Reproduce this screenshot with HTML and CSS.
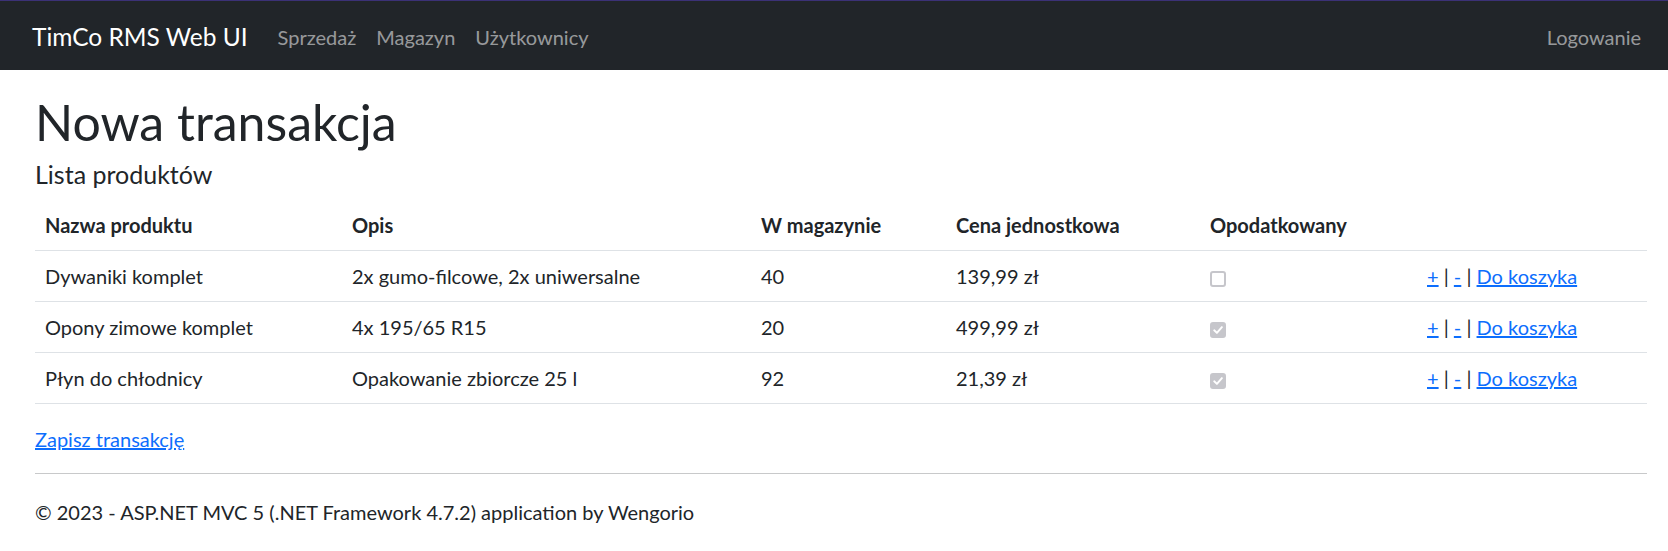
FILE: index.html
```html
<!DOCTYPE html>
<html lang="pl">
<head>
<meta charset="utf-8">
<title>Nowa transakcja - TimCo RMS Web UI</title>
<link rel="stylesheet" href="styles.css">
</head>
<body>
<nav class="navbar">
  <a class="brand" href="#">TimCo RMS Web UI</a>
  <ul class="nav-links">
    <li><a href="#">Sprzedaż</a></li>
    <li><a href="#">Magazyn</a></li>
    <li><a href="#">Użytkownicy</a></li>
  </ul>
  <ul class="nav-links nav-right">
    <li><a href="#">Logowanie</a></li>
  </ul>
</nav>
<main class="content">
  <h1 class="title">Nowa transakcja</h1>
  <h5 class="subtitle">Lista produktów</h5>
  <table class="products">
    <colgroup>
      <col class="c-name"><col class="c-desc"><col class="c-stock"><col class="c-price"><col class="c-tax"><col class="c-act">
    </colgroup>
    <thead>
      <tr><th>Nazwa produktu</th><th>Opis</th><th>W magazynie</th><th>Cena jednostkowa</th><th>Opodatkowany</th><th></th></tr>
    </thead>
    <tbody>
      <tr>
        <td>Dywaniki komplet</td><td>2x gumo-filcowe, 2x uniwersalne</td><td>40</td><td>139,99 zł</td>
        <td><input class="check" type="checkbox" disabled></td>
        <td><a href="#">+</a> | <a href="#">-</a> | <a href="#">Do koszyka</a></td>
      </tr>
      <tr>
        <td>Opony zimowe komplet</td><td>4x 195/65 R15</td><td>20</td><td>499,99 zł</td>
        <td><input class="check" type="checkbox" checked disabled></td>
        <td><a href="#">+</a> | <a href="#">-</a> | <a href="#">Do koszyka</a></td>
      </tr>
      <tr>
        <td>Płyn do chłodnicy</td><td>Opakowanie zbiorcze 25 l</td><td>92</td><td>21,39 zł</td>
        <td><input class="check" type="checkbox" checked disabled></td>
        <td><a href="#">+</a> | <a href="#">-</a> | <a href="#">Do koszyka</a></td>
      </tr>
    </tbody>
  </table>
  <p class="save"><a href="#">Zapisz transakcję</a></p>
  <hr class="rule">
  <footer class="footer">
    <p>© 2023 - ASP.NET MVC 5 (.NET Framework 4.7.2) application by Wengorio</p>
  </footer>
</main>
</body>
</html>
```
FILE: styles.css
```css
* { box-sizing: border-box; }
html, body {
  margin: 0;
  padding: 0;
  background: #fff;
}
body {
  font-family: Lato, "Open Sans", sans-serif;
  font-size: 20px;
  line-height: 1.5;
  color: #212529;
}
a { color: #0d6efd; text-decoration: underline; }

.navbar {
  display: flex;
  align-items: center;
  height: 70px;
  border-top: 1px solid #3b3176;
  background: #212529;
  padding: 3px 17px 0 32px;
}
.brand {
  font-size: 24.5px;
  line-height: 1.5;
  color: #fff;
  text-decoration: none;
  margin-right: 20px;
}
.nav-links {
  display: flex;
  list-style: none;
  margin: 0;
  padding: 0;
}
.nav-links a {
  display: block;
  padding: 0 10px;
  color: rgba(255,255,255,.55);
  text-decoration: none;
  font-size: 20px;
  line-height: 1.5;
}
.nav-right { margin-left: auto; }

.content {
  padding: 22px 21px 20px 35px;
}
.title {
  font-size: 50px;
  font-weight: 400;
  line-height: 1.2;
  margin: 0 0 7px;
}
.subtitle {
  font-size: 25px;
  font-weight: 400;
  line-height: 1.2;
  margin: 0 0 11px;
}
.products {
  width: 100%;
  border-collapse: collapse;
  table-layout: fixed;
  margin-bottom: 20px;
}
.c-name { width: 307px; }
.c-desc { width: 409px; }
.c-stock { width: 195px; }
.c-price { width: 254px; }
.c-tax { width: 217px; }
.products th, .products td {
  text-align: left;
  padding: 10px;
  border-bottom: 1px solid #dee2e6;
  white-space: nowrap;
}
.products th { font-weight: 700; }
.check {
  -webkit-appearance: none;
  appearance: none;
  width: 16px;
  height: 16px;
  margin: 0;
  border: 2px solid #c6c6cb;
  border-radius: 3px;
  background: #fff;
  vertical-align: middle;
}
.check:checked {
  background: #c6c6cb url("data:image/svg+xml,%3Csvg xmlns='http://www.w3.org/2000/svg' viewBox='0 0 12 12'%3E%3Cpath d='M2.2 6.3 L4.9 8.9 L9.9 3.1' fill='none' stroke='white' stroke-width='1.9' stroke-linecap='round' stroke-linejoin='round'/%3E%3C/svg%3E") center / 12px 12px no-repeat;
}
.save { margin: 0 0 19px; }
.rule {
  border: 0;
  border-top: 1px solid #c8c9ca;
  margin: 0 0 23px;
}
.footer p { margin: 0; }
```
